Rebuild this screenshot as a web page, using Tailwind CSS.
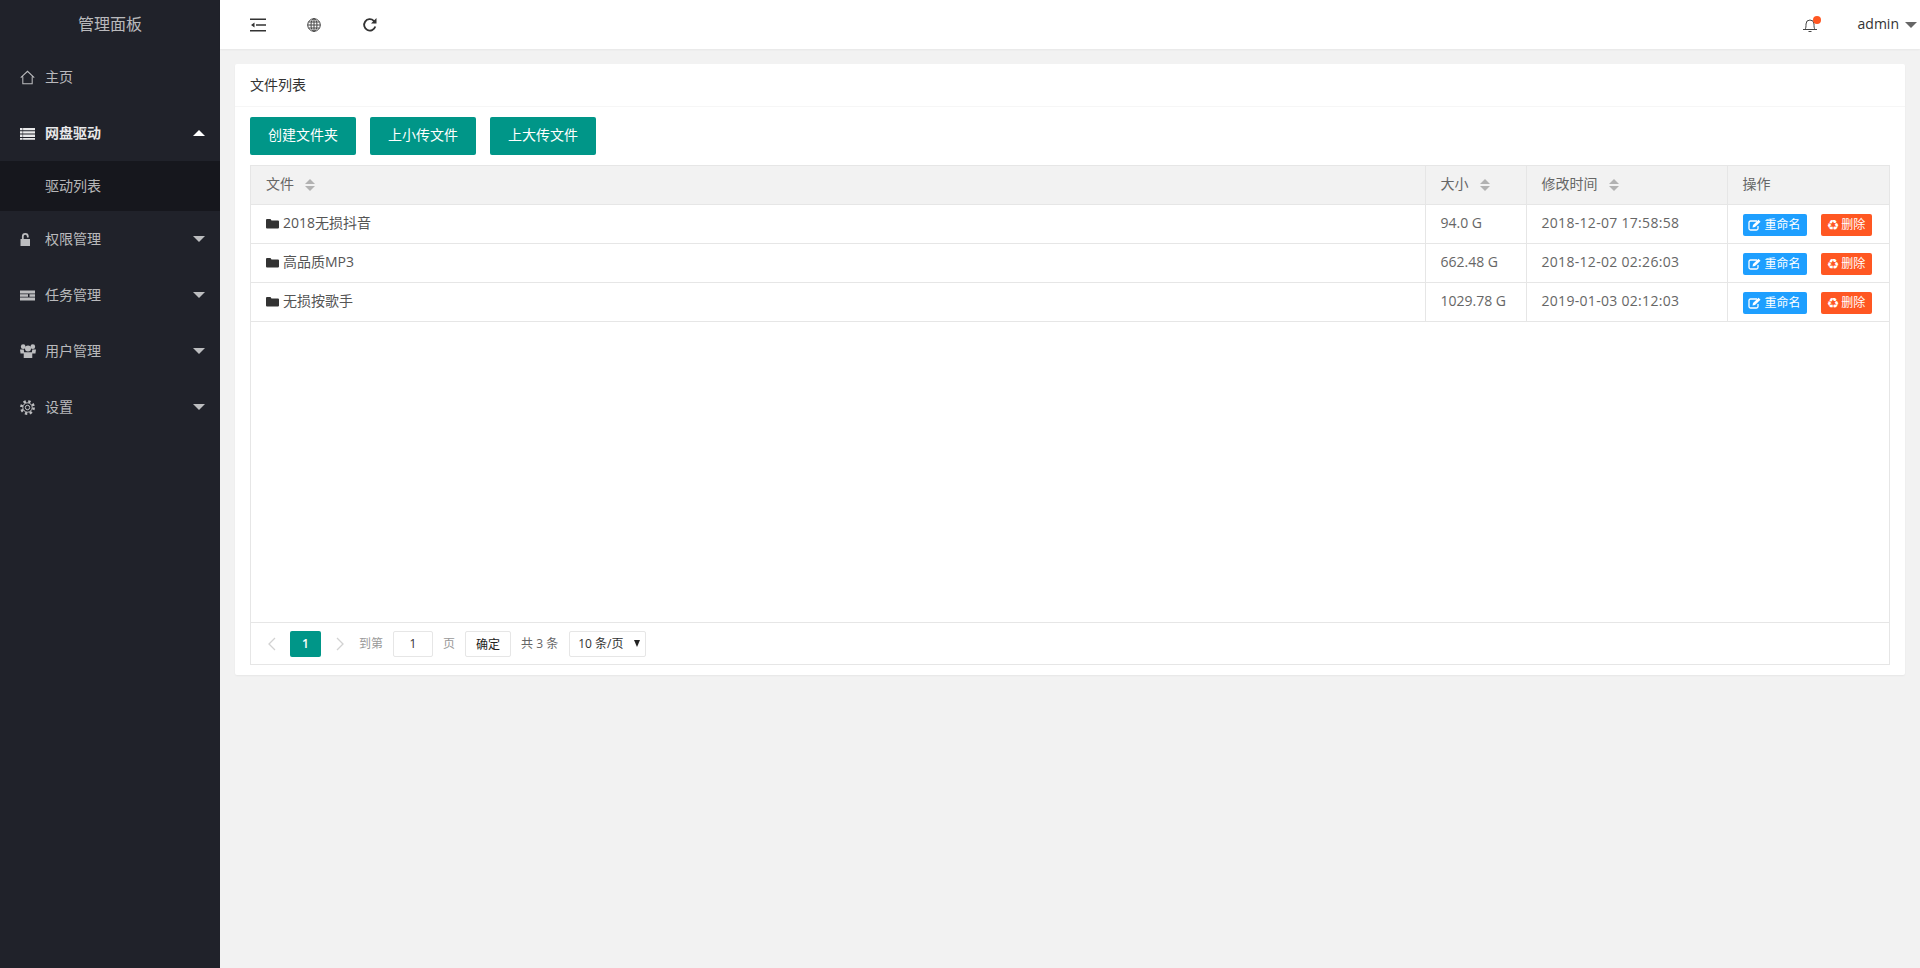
<!DOCTYPE html>
<html lang="zh-CN">
<head>
    <meta charset="UTF-8">
    <meta name="viewport" content="width=device-width, initial-scale=1.0">
    <title>管理面板</title>
    <script src="https://cdn.jsdelivr.net/npm/@tailwindcss/browser@4"></script>
</head>
<body class="h-screen overflow-hidden flex bg-[#f2f2f2] text-[14px] text-[#666] font-['Open_Sans','Noto_Sans_CJK_SC',sans-serif]">
    <!-- Sidebar -->
    <aside class="w-[220px] shrink-0 h-full bg-[#20222a] text-white/70">
        <div class="h-[49px] flex items-center justify-center text-[16px] text-white/70 pb-[2px]">管理面板</div>
        <nav>
            <a class="h-[56px] flex items-center pl-[20px]">
                <svg class="w-[15px] h-[15px] mr-[10px]" viewBox="0 0 16 16" fill="none" stroke="currentColor" stroke-width="1.1">
                    <path d="M.8 8.2 8 1.4l7.2 6.8M3 7v7.6h10V7"></path>
                </svg>
                <span class="pb-[2px]">主页</span>
            </a>
            <a class="h-[56px] flex items-center pl-[20px] pr-[15px] font-bold text-white/90">
                <svg class="w-[15px] h-[15px] mr-[10px]" viewBox="0 0 15 15" fill="currentColor">
                    <path d="M0 2h2.600v2.300H0zM3.100 2H15v2.300H3.100zM0 5.300h2.600v2.300H0zM3.100 5.300H15v2.300H3.100zM0 8.600h2.600v2.300H0zM3.100 8.600H15v2.300H3.100zM0 11.900h2.600v1.800H0zM3.100 11.900H15v1.800H3.100z"></path>
                </svg>
                <span class="pb-[2px]">网盘驱动</span>
                <span class="ml-auto w-0 h-0 border-x-[6px] border-x-transparent border-b-[6px] border-b-white"></span>
            </a>
            <div class="h-[50px] bg-black/30 flex items-center pl-[45px] pb-[2px]">驱动列表</div>
            <a class="h-[56px] flex items-center pl-[20px] pr-[15px]">
                <svg class="w-[15px] h-[15px] mr-[10px]" viewBox="0 0 15 15" fill="currentColor">
                    <path d="M.500 7h9.500v7H.500z"></path>
                    <path d="M2.800 7V4.300a2.500 2.500 0 0 1 5 0V5.500" fill="none" stroke="currentColor" stroke-width="1.800"></path>
                </svg>
                <span class="pb-[2px]">权限管理</span>
                <span class="ml-auto w-0 h-0 border-x-[6px] border-x-transparent border-t-[6px] border-t-white/70"></span>
            </a>
            <a class="h-[56px] flex items-center pl-[20px] pr-[15px]">
                <svg class="w-[15px] h-[15px] mr-[10px]" viewBox="0 0 15 15" fill="currentColor">
                    <path d="M0 2.500h15v3H0zM0 6.300h8v2.500H0zM9.500 6.300H15v2.500H9.500zM0 9.600h15v3H0z"></path>
                </svg>
                <span class="pb-[2px]">任务管理</span>
                <span class="ml-auto w-0 h-0 border-x-[6px] border-x-transparent border-t-[6px] border-t-white/70"></span>
            </a>
            <a class="h-[56px] flex items-center pl-[20px] pr-[14px]">
                <svg class="w-[16px] h-[16px] mr-[9px]" viewBox="0 0 15 15" fill="currentColor">
                    <circle cx="3" cy="3.400" r="2.200"></circle>
                    <circle cx="12" cy="3.400" r="2.200"></circle>
                    <circle cx="7.500" cy="5.200" r="2.800"></circle>
                    <path d="M0 6h3.500L4 9.800H.500zM11.500 6H15l-.5 3.800H11zM3.500 8.700h8V14h-8z"></path>
                </svg>
                <span class="pb-[2px]">用户管理</span>
                <span class="ml-auto mr-px w-0 h-0 border-x-[6px] border-x-transparent border-t-[6px] border-t-white/70"></span>
            </a>
            <a class="h-[56px] flex items-center pl-[20px] pr-[15px]">
                <svg class="w-[15px] h-[15px] mr-[10px]" viewBox="0 0 15 15" fill="none" stroke="currentColor">
                    <circle cx="7.500" cy="7.500" r="6.200" stroke-width="2.400" stroke-dasharray="2.400 2.470"></circle>
                    <circle cx="7.500" cy="7.500" r="4.700" stroke-width="1"></circle>
                    <circle cx="7.500" cy="7.500" r="2.200" stroke-width="1"></circle>
                </svg>
                <span class="pb-[2px]">设置</span>
                <span class="ml-auto w-0 h-0 border-x-[6px] border-x-transparent border-t-[6px] border-t-white/70"></span>
            </a>
        </nav>
    </aside>

    <div class="flex-1 min-w-0 flex flex-col">
        <!-- Header -->
        <header class="h-[49px] shrink-0 bg-white shadow-[0_1px_2px_rgba(0,0,0,0.05)] flex items-center pl-[30px] pr-[3px] text-[#333]">
            <svg class="w-[16px] h-[16px]" viewBox="0 0 16 16" fill="#333">
                <path d="M0 1.500h16v1.400H0zM6 7.300h10v1.400H6zM0 13.100h16v1.400H0zM1 8l3.500-2.400v4.800z"></path>
            </svg>
            <svg class="w-[14px] h-[14px] ml-[41px]" viewBox="0 0 14 14" fill="none" stroke="#444" stroke-width="1">
                <circle cx="7" cy="7" r="6.300"></circle>
                <ellipse cx="7" cy="7" rx="3" ry="6.300"></ellipse>
                <path d="M7 .7v12.600M.7 7h12.600M1.500 4h11M1.500 10h11"></path>
            </svg>
            <svg class="w-[16px] h-[16px] ml-[41px]" viewBox="0 0 16 16" fill="none" stroke="#333" stroke-width="1.800">
                <path d="M13.300 9.500A5.700 5.700 0 1 1 11.800 3.800L13.500 5.500"></path>
                <path d="M14.500 1v5.500H9z" fill="#333" stroke="none"></path>
            </svg>
            <div class="relative ml-auto w-[14px] h-[16px]">
                <svg class="w-[14px] h-[16px]" viewBox="0 0 14 16" fill="none" stroke="#444" stroke-width="1">
                    <path d="M0 12.500h14M2 12.500c1-1.500 1-3 1-5.500a4 4 0 0 1 8 0c0 2.500 0 4 1 5.500M5.500 14.500h3"></path>
                </svg>
                <span class="absolute -top-[1px] left-[10px] w-[8px] h-[8px] rounded-full bg-[#ff5722]"></span>
            </div>
            <span class="ml-[41px] pb-[2px]">admin</span>
            <span class="ml-[6px] w-0 h-0 border-x-[6px] border-x-transparent border-t-[6px] border-t-[#666]"></span>
        </header>

        <!-- Card -->
        <main class="mt-[15px] mx-[15px] bg-white rounded-[2px] shadow-[0_1px_2px_rgba(0,0,0,0.05)]">
            <div class="h-[43px] px-[15px] pb-[2px] flex items-center border-b border-[#f6f6f6] text-[#333]">文件列表</div>
            <div class="px-[15px] pt-[10px] pb-[10px]">
                <div class="flex gap-[14px]">
                    <button class="w-[106px] h-[38px] pb-[4px] rounded-[2px] bg-[#009688] text-white">创建文件夹</button>
                    <button class="w-[106px] h-[38px] pb-[4px] rounded-[2px] bg-[#009688] text-white">上小传文件</button>
                    <button class="w-[106px] h-[38px] pb-[4px] rounded-[2px] bg-[#009688] text-white">上大传文件</button>
                </div>
                <div class="mt-[10px] h-[500px] flex flex-col border border-[#e6e6e6]">
                    <div class="flex-1">
                        <table class="w-full table-fixed border-collapse">
                            <colgroup>
                                <col class="w-[1174px]">
                                <col class="w-[101px]">
                                <col class="w-[201px]">
                                <col>
                            </colgroup>
                            <thead class="bg-[#f2f2f2]">
                                <tr class="h-[38px] border-b border-[#e6e6e6] text-left">
                                    <th class="px-[15px] font-normal border-r border-[#e6e6e6]">
                                        <div class="flex items-center gap-[11px]"><span class="pb-[2px]">文件</span><span class="flex flex-col gap-[2px]"><i class="block w-0 h-0 border-x-[5px] border-x-transparent border-b-[5px] border-b-[#b2b2b2]"></i><i class="block w-0 h-0 border-x-[5px] border-x-transparent border-t-[5px] border-t-[#b2b2b2]"></i></span></div>
                                    </th>
                                    <th class="px-[15px] font-normal border-r border-[#e6e6e6]">
                                        <div class="flex items-center gap-[11px]"><span class="pb-[2px]">大小</span><span class="flex flex-col gap-[2px]"><i class="block w-0 h-0 border-x-[5px] border-x-transparent border-b-[5px] border-b-[#b2b2b2]"></i><i class="block w-0 h-0 border-x-[5px] border-x-transparent border-t-[5px] border-t-[#b2b2b2]"></i></span></div>
                                    </th>
                                    <th class="px-[15px] font-normal border-r border-[#e6e6e6]">
                                        <div class="flex items-center gap-[11px]"><span class="pb-[2px]">修改时间</span><span class="flex flex-col gap-[2px]"><i class="block w-0 h-0 border-x-[5px] border-x-transparent border-b-[5px] border-b-[#b2b2b2]"></i><i class="block w-0 h-0 border-x-[5px] border-x-transparent border-t-[5px] border-t-[#b2b2b2]"></i></span></div>
                                    </th>
                                    <th class="px-[15px] pb-[2px] font-normal">操作</th>
                                </tr>
                            </thead>
                            <tbody>
                                <tr class="h-[39px] border-b border-[#e6e6e6]">
                                    <td class="px-[15px] border-r border-[#e6e6e6] text-[#555]">
                                        <div class="flex items-center">
                                            <svg class="w-[13px] h-[13px] mr-[4px]" viewBox="0 0 13 13" fill="#333"><path d="M0 3a1 1 0 0 1 1-1h3.500l1 1.500H12a1 1 0 0 1 1 1V10.500a1 1 0 0 1-1 1H1a1 1 0 0 1-1-1z"></path></svg>
                                            <span class="pb-[2px]">2018无损抖音</span>
                                        </div>
                                    </td>
                                    <td class="px-[15px] pb-[2px] border-r border-[#e6e6e6]">94.0 G</td>
                                    <td class="px-[15px] pb-[2px] border-r border-[#e6e6e6] tracking-[0.3px]">2018-12-07 17:58:58</td>
                                    <td class="px-[15px] pt-[2px]">
                                        <div class="flex gap-[14px] text-[12px] text-white">
                                            <button class="w-[64px] h-[22px] rounded-[2px] bg-[#1e9fff] flex items-center justify-center gap-[3px]">
                                                <svg class="w-[13px] h-[12px]" viewBox="0 0 13 12" fill="none" stroke="white" stroke-width="1.300"><path d="M9 2H2.500A1.500 1.500 0 0 0 1 3.500v6A1.500 1.500 0 0 0 2.500 11h6A1.500 1.500 0 0 0 10 9.500V7"></path><path d="M4.500 8.500l.5-2.500L10.500.7l2 2L7 8z" fill="white" stroke="none"></path></svg>
                                                <span>重命名</span>
                                            </button>
                                            <button class="w-[51px] h-[22px] rounded-[2px] bg-[#ff5722] flex items-center justify-center gap-[2px]">
                                                <span class="font-['DejaVu_Sans'] text-[14px] leading-[14px]">♻</span>
                                                <span>删除</span>
                                            </button>
                                        </div>
                                    </td>
                                </tr>
                                <tr class="h-[39px] border-b border-[#e6e6e6]">
                                    <td class="px-[15px] border-r border-[#e6e6e6] text-[#555]">
                                        <div class="flex items-center">
                                            <svg class="w-[13px] h-[13px] mr-[4px]" viewBox="0 0 13 13" fill="#333"><path d="M0 3a1 1 0 0 1 1-1h3.500l1 1.500H12a1 1 0 0 1 1 1V10.500a1 1 0 0 1-1 1H1a1 1 0 0 1-1-1z"></path></svg>
                                            <span class="pb-[2px]">高品质MP3</span>
                                        </div>
                                    </td>
                                    <td class="px-[15px] pb-[2px] border-r border-[#e6e6e6]">662.48 G</td>
                                    <td class="px-[15px] pb-[2px] border-r border-[#e6e6e6] tracking-[0.3px]">2018-12-02 02:26:03</td>
                                    <td class="px-[15px] pt-[2px]">
                                        <div class="flex gap-[14px] text-[12px] text-white">
                                            <button class="w-[64px] h-[22px] rounded-[2px] bg-[#1e9fff] flex items-center justify-center gap-[3px]">
                                                <svg class="w-[13px] h-[12px]" viewBox="0 0 13 12" fill="none" stroke="white" stroke-width="1.300"><path d="M9 2H2.500A1.500 1.500 0 0 0 1 3.500v6A1.500 1.500 0 0 0 2.500 11h6A1.500 1.500 0 0 0 10 9.500V7"></path><path d="M4.500 8.500l.5-2.500L10.500.7l2 2L7 8z" fill="white" stroke="none"></path></svg>
                                                <span>重命名</span>
                                            </button>
                                            <button class="w-[51px] h-[22px] rounded-[2px] bg-[#ff5722] flex items-center justify-center gap-[2px]">
                                                <span class="font-['DejaVu_Sans'] text-[14px] leading-[14px]">♻</span>
                                                <span>删除</span>
                                            </button>
                                        </div>
                                    </td>
                                </tr>
                                <tr class="h-[39px] border-b border-[#e6e6e6]">
                                    <td class="px-[15px] border-r border-[#e6e6e6] text-[#555]">
                                        <div class="flex items-center">
                                            <svg class="w-[13px] h-[13px] mr-[4px]" viewBox="0 0 13 13" fill="#333"><path d="M0 3a1 1 0 0 1 1-1h3.500l1 1.500H12a1 1 0 0 1 1 1V10.500a1 1 0 0 1-1 1H1a1 1 0 0 1-1-1z"></path></svg>
                                            <span class="pb-[2px]">无损按歌手</span>
                                        </div>
                                    </td>
                                    <td class="px-[15px] pb-[2px] border-r border-[#e6e6e6]">1029.78 G</td>
                                    <td class="px-[15px] pb-[2px] border-r border-[#e6e6e6] tracking-[0.3px]">2019-01-03 02:12:03</td>
                                    <td class="px-[15px] pt-[2px]">
                                        <div class="flex gap-[14px] text-[12px] text-white">
                                            <button class="w-[64px] h-[22px] rounded-[2px] bg-[#1e9fff] flex items-center justify-center gap-[3px]">
                                                <svg class="w-[13px] h-[12px]" viewBox="0 0 13 12" fill="none" stroke="white" stroke-width="1.300"><path d="M9 2H2.500A1.500 1.500 0 0 0 1 3.500v6A1.500 1.500 0 0 0 2.500 11h6A1.500 1.500 0 0 0 10 9.500V7"></path><path d="M4.500 8.500l.5-2.500L10.500.7l2 2L7 8z" fill="white" stroke="none"></path></svg>
                                                <span>重命名</span>
                                            </button>
                                            <button class="w-[51px] h-[22px] rounded-[2px] bg-[#ff5722] flex items-center justify-center gap-[2px]">
                                                <span class="font-['DejaVu_Sans'] text-[14px] leading-[14px]">♻</span>
                                                <span>删除</span>
                                            </button>
                                        </div>
                                    </td>
                                </tr>
                            </tbody>
                        </table>
                    </div>
                    <!-- Pagination -->
                    <div class="h-[42px] shrink-0 border-t border-[#e6e6e6] flex items-center pl-[5px] text-[12px] text-[#333]">
                        <svg class="w-[31px] h-[14px]" viewBox="0 0 31 14" fill="none" stroke="#d2d2d2" stroke-width="1.300"><path d="M19 1l-6 6 6 6"></path></svg>
                        <span class="ml-[3px] w-[31px] h-[26px] rounded-[2px] bg-[#009688] text-white font-semibold flex items-center justify-center">1</span>
                        <svg class="ml-[3px] w-[31px] h-[14px]" viewBox="0 0 31 14" fill="none" stroke="#d2d2d2" stroke-width="1.300"><path d="M13 1l6 6-6 6"></path></svg>
                        <span class="ml-[4px] text-[#999]">到第</span>
                        <input value="1" class="ml-[10px] w-[40px] h-[26px] border border-[#e6e6e6] rounded-[2px] text-center">
                        <span class="ml-[10px] text-[#999]">页</span>
                        <button class="ml-[10px] w-[46px] h-[26px] pt-[2px] border border-[#e6e6e6] rounded-[2px] bg-white text-[#222]">确定</button>
                        <span class="ml-[10px] text-[#666]">共 3 条</span>
                        <div class="relative ml-[11px] w-[77px] h-[26px]">
                            <select class="appearance-none w-full h-full border border-[#e6e6e6] rounded-[2px] bg-white pl-[8px] text-[#333]">
                                <option>10 条/页</option>
                            </select>
                            <span class="absolute right-[6px] top-[9px] w-0 h-0 border-x-[3px] border-x-transparent border-t-[7px] border-t-[#222]"></span>
                        </div>
                    </div>
                </div>
            </div>
        </main>
    </div>
</body>
</html>
